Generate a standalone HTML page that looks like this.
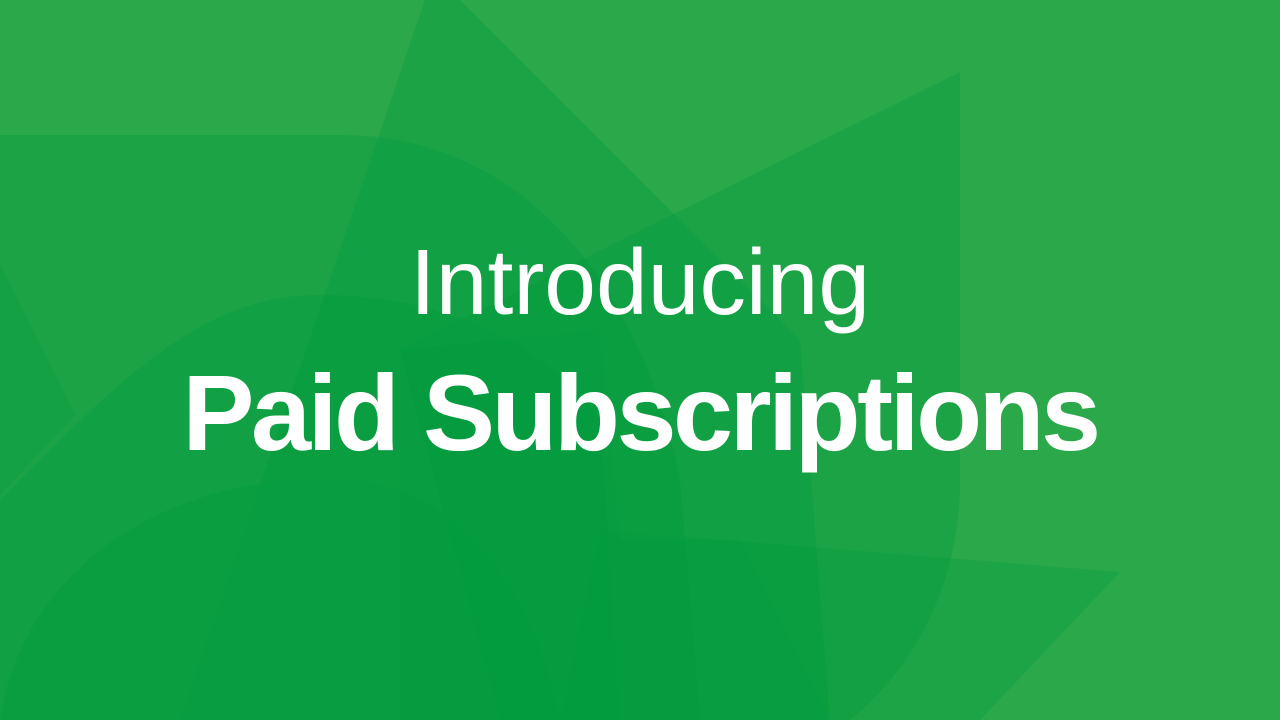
<!DOCTYPE html>
<html><head><style>
html,body{margin:0;padding:0;width:1280px;height:720px;overflow:hidden;background:#2aa84a;}
svg{position:absolute;left:0;top:0}
.t{position:absolute;left:0;width:1280px;text-align:center;color:#fff;font-family:"Liberation Sans",sans-serif;white-space:nowrap;line-height:1}
</style></head><body>
<svg width="1280" height="720" viewBox="0 0 1280 720">
<g fill="#009c3e">
<path d="M0 135 H340 C520 135 640 280 680 480 L700 720 H0 Z" opacity="0.35"/>
<path d="M425 0 H460 L800 340 L830 720 H180 Z" opacity="0.35"/>
<path d="M960 72 V480 C960 600 900 680 850 720 H500 L400 350 Z" opacity="0.35"/>
<path d="M600 530 L1120 572 L980 720 H560 Z" opacity="0.3"/>
<path d="M0 265 L75 415 L0 495 Z" opacity="0.25"/>
<path d="M320 295 C200 295 120 380 0 500 V720 H620 L600 420 C540 340 440 295 320 295 Z" opacity="0.35"/>
<path d="M330 478 C150 478 20 580 0 720 H560 C540 600 460 478 330 478 Z" opacity="0.3"/>
<path d="M400 350 L600 330 L620 540 L740 540 L830 720 H400 Z" opacity="0.3"/>
</g>
</svg>
<div class="t" style="top:236px;font-size:93px;font-weight:300;">Introducing</div>
<div class="t" style="top:359px;font-size:108px;font-weight:bold;letter-spacing:-3.5px;">Paid Subscriptions</div>
</body></html>
